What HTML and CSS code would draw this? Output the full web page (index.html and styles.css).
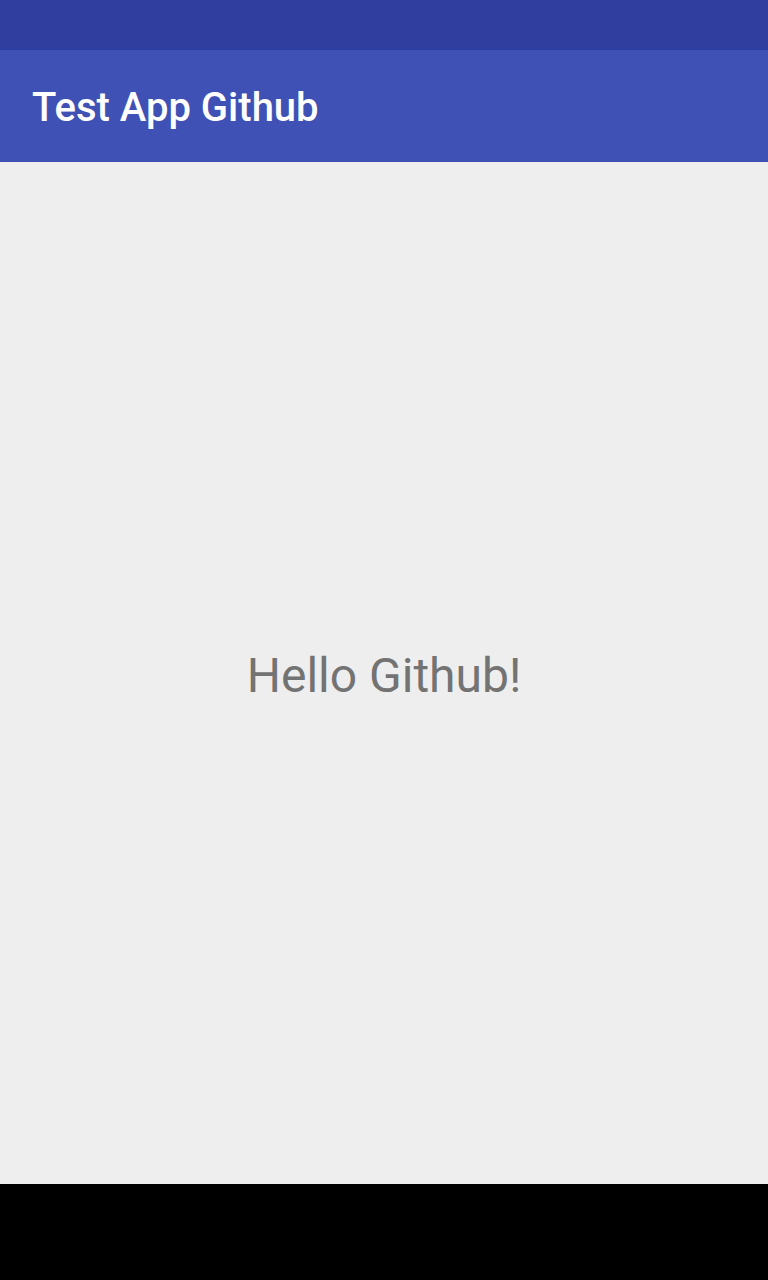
FILE: index.html
```html
<!DOCTYPE html>
<html>
<head>
<meta charset="utf-8">
<link rel="stylesheet" href="styles.css">
</head>
<body>
<div class="screen">
  <div class="status-bar"></div>
  <header class="app-bar"><h1 class="title">Test App Github</h1></header>
  <main class="content"><p class="hello">Hello Github!</p></main>
  <div class="nav-bar"></div>
</div>
</body>
</html>
```
FILE: styles.css
```css
html, body { margin: 0; padding: 0; }
body { font-family: Roboto, "Noto Sans", sans-serif; }
.screen { width: 768px; height: 1280px; display: flex; flex-direction: column; }
.status-bar { height: 50px; background: #303f9f; flex: none; }
.app-bar { height: 112px; background: #3f51b5; flex: none; display: flex; align-items: center; padding-left: 32px; padding-top: 4px; box-sizing: border-box; }
.title { margin: 0; color: #ffffff; font-weight: 500; font-size: 40px; line-height: 1; }
.content { flex: 1; background: #eeeeee; display: flex; align-items: center; justify-content: center; padding-top: 6px; }
.hello { margin: 0; color: #737373; font-size: 48px; font-weight: 400; line-height: 1; }
.nav-bar { height: 96px; background: #000000; flex: none; }
```
